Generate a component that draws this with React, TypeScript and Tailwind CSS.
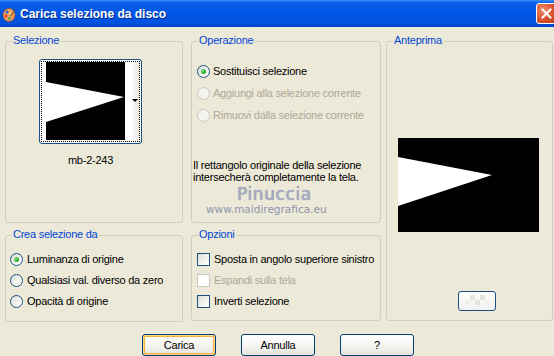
import React from "react";

const FONT = { fontFamily: '"Liberation Sans", Arial, sans-serif' };

function Radio({ checked = false, disabled = false }: { checked?: boolean; disabled?: boolean }) {
  return (
    <span
      className={
        disabled
          ? "w-[13px] h-[13px] rounded-full border border-[#CAC8BB] bg-[#F4F3EE] shrink-0 flex items-center justify-center"
          : "w-[13px] h-[13px] rounded-full border border-[#1C5180] bg-[linear-gradient(135deg,#DCDCD7_0%,#F4F4F0_60%,#FFFFFF_100%)] shrink-0 flex items-center justify-center"
      }
    >
      {checked && (
        <span className="w-[5px] h-[5px] rounded-full bg-[radial-gradient(circle_at_35%_35%,#7FE07F_0%,#21A121_70%,#1A7F1A_100%)]" />
      )}
    </span>
  );
}

function Check({ disabled = false }: { disabled?: boolean }) {
  return (
    <span
      className={
        disabled
          ? "w-[13px] h-[13px] border border-[#CAC8BB] bg-white shrink-0"
          : "w-[13px] h-[13px] border border-[#1C5180] bg-[linear-gradient(135deg,#DCDCD7_0%,#F4F4F0_60%,#FFFFFF_100%)] shrink-0"
      }
    />
  );
}

function Group({
  label,
  className,
  children,
}: {
  label: string;
  className: string;
  children?: React.ReactNode;
}) {
  return (
    <div className={"relative border border-[#D0D0BF] rounded-[3px] " + className}>
      <span className="absolute left-[6px] top-[-8px] px-[1px] bg-[#ECE9D8] text-[#0046D5] leading-[13px] tracking-[-0.25px]">
        {label}
      </span>
      {children}
    </div>
  );
}

function XPButton({ label, focused = false }: { label: string; focused?: boolean }) {
  return (
    <button
      className={
        focused
          ? "w-[74px] h-[22px] rounded-[3px] border border-[#003C74] bg-[linear-gradient(to_bottom,#FFFFFF_0%,#F3F3EF_60%,#E5E4DD_100%)] shadow-[inset_0_0_0_1px_#FFD78C,inset_0_0_0_2px_#F5B33E] text-[11px] text-black leading-none tracking-[-0.25px]"
          : "w-[74px] h-[22px] rounded-[3px] border border-[#003C74] bg-[linear-gradient(to_bottom,#FFFFFF_0%,#F3F3EF_60%,#E5E4DD_100%)] text-[11px] text-black leading-none tracking-[-0.25px]"
      }
    >
      {label}
    </button>
  );
}

function AppIcon() {
  return (
    <svg width="16" height="16" viewBox="0 0 16 16">
      <ellipse cx="7" cy="9" rx="6" ry="6.5" fill="#F0A060" stroke="#A05020" strokeWidth="0.8" />
      <circle cx="5" cy="6" r="1.6" fill="#3A6FD8" />
      <circle cx="4" cy="10" r="1.4" fill="#E23A2A" />
      <circle cx="7.5" cy="12.5" r="1.3" fill="#2FA84A" />
      <circle cx="8.5" cy="7.5" r="1" fill="#F8E060" />
      <path d="M15 1 L10 9 L9 8.5 Z" fill="#6B4A2A" />
      <path d="M10 9 L8.5 11 L9 8.5 Z" fill="#333" />
    </svg>
  );
}

function Triangle({ w, h, top, bottom, tipX, tipY }: { w: number; h: number; top: number; bottom: number; tipX: number; tipY: number }) {
  return (
    <svg width={w} height={h} viewBox={`0 0 ${w} ${h}`} className="block">
      <rect width={w} height={h} fill="#000" />
      <polygon points={`0,${top} ${tipX},${tipY} 0,${bottom}`} fill="#fff" />
    </svg>
  );
}

export default function App() {
  return (
    <div
      className="relative w-[554px] h-[356px] bg-[#ECE9D8] flex flex-col overflow-hidden text-[11px] text-black"
      style={FONT}
    >
      {/* Title bar */}
      <div className="h-[27px] shrink-0 flex items-center bg-[linear-gradient(to_bottom,#3D8FFA_0%,#0A5FEC_10%,#0056E6_45%,#0053E0_85%,#0044C6_100%)]">
        <div className="ml-[2px] mt-[1px] w-[16px] h-[16px]">
          <AppIcon />
        </div>
        <span className="ml-[2px] text-white font-bold text-[12px] tracking-[0px] [text-shadow:1px_1px_0_#0A2A8A]">
          Carica selezione da disco
        </span>
        <div className="ml-auto mr-[-3px] w-[21px] h-[21px] rounded-[3px] border border-white bg-[radial-gradient(circle_at_30%_30%,#EE8A68_0%,#D9522C_55%,#C23A18_100%)] flex items-center justify-center">
          <svg width="11" height="11" viewBox="0 0 11 11">
            <path d="M1.5 1.5 L9.5 9.5 M9.5 1.5 L1.5 9.5" stroke="#fff" strokeWidth="2" strokeLinecap="square" />
          </svg>
        </div>
      </div>

      {/* Body */}
      <div className="flex items-start pt-[14px] pl-[5px]">
        {/* Left column */}
        <div className="flex flex-col w-[178px]">
          <Group label="Selezione" className="h-[182px]">
            <div className="ml-[33px] mt-[17px] w-[103px] flex flex-col items-center">
              <div className="w-[103px] h-[85px] rounded-[3px] border border-[#1C4F85] bg-white p-[1px]">
                <div className="w-full h-full border border-dotted border-black flex">
                  <div className="w-[4px] h-full bg-white" />
                  <Triangle w={79} h={78} top={20} bottom={60} tipX={78} tipY={35} />
                  <div className="relative flex-1 h-full bg-[linear-gradient(to_right,#FFFFFF_0%,#FFFFFF_40%,#E6E6E0_100%)]">
                    <span className="absolute right-[1px] top-[37px] w-0 h-0 border-l-[3px] border-r-[3px] border-t-[3px] border-l-transparent border-r-transparent border-t-black" />
                  </div>
                </div>
              </div>
              <span className="mt-[10px] leading-[13px] tracking-[-0.25px]">mb-2-243</span>
            </div>
          </Group>
          <Group label="Crea selezione da" className="h-[87px] mt-[12px]">
            <div className="flex flex-col pt-[13px] pl-[4px] tracking-[-0.25px]">
              <div className="h-[21px] flex items-center gap-[4px]">
                <Radio checked />
                <span>Luminanza di origine</span>
              </div>
              <div className="h-[21px] flex items-center gap-[4px]">
                <Radio />
                <span>Qualsiasi val. diverso da zero</span>
              </div>
              <div className="h-[21px] flex items-center gap-[4px]">
                <Radio />
                <span>Opacità di origine</span>
              </div>
            </div>
          </Group>
        </div>

        {/* Middle column */}
        <div className="flex flex-col w-[190px] ml-[8px]">
          <Group label="Operazione" className="h-[182px]">
            <div className="flex flex-col pt-[18px] pl-[5px] tracking-[-0.25px]">
              <div className="h-[22px] flex items-center gap-[3px]">
                <Radio checked />
                <span>Sostituisci selezione</span>
              </div>
              <div className="h-[22px] flex items-center gap-[3px] text-[#ACA899]">
                <Radio disabled />
                <span>Aggiungi alla selezione corrente</span>
              </div>
              <div className="h-[22px] flex items-center gap-[3px] text-[#ACA899]">
                <Radio disabled />
                <span>Rimuovi dalla selezione corrente</span>
              </div>
            </div>
            <p className="mt-[33px] pl-[1px] leading-[12px] tracking-[-0.25px]">
              Il rettangolo originale della selezione
              <br />
              intersecherà completamente la tela.
            </p>
          </Group>
          <Group label="Opzioni" className="h-[86px] mt-[12px]">
            <div className="flex flex-col pt-[13px] pl-[5px] tracking-[-0.25px]">
              <div className="h-[21px] flex items-center gap-[4px]">
                <Check />
                <span>Sposta in angolo superiore sinistro</span>
              </div>
              <div className="h-[21px] flex items-center gap-[4px] text-[#ACA899]">
                <Check disabled />
                <span>Espandi sulla tela</span>
              </div>
              <div className="h-[21px] flex items-center gap-[4px]">
                <Check />
                <span>Inverti selezione</span>
              </div>
            </div>
          </Group>
        </div>

        {/* Right column */}
        <div className="w-[167px] ml-[5px]">
          <Group label="Anteprima" className="h-[280px]">
            <div className="flex flex-col pt-[96px] pl-[11px]">
              <Triangle w={141} h={94} top={19} bottom={68} tipX={94} tipY={37} />
              <div className="mt-[59px] ml-[60px] w-[38px] h-[20px] rounded-[3px] border border-[#1C4F85] bg-[linear-gradient(to_bottom,#FFFFFF_0%,#F1F1EC_100%)] flex items-center justify-center">
                <svg width="26" height="14" viewBox="0 0 26 14">
                  <rect x="6" y="1" width="5" height="5" fill="#E4E4E0" />
                  <rect x="16" y="1" width="5" height="5" fill="#E4E4E0" />
                  <rect x="11" y="6" width="5" height="5" fill="#E4E4E0" />
                  <rect x="1" y="6" width="5" height="5" fill="#EFEFEB" />
                  <rect x="21" y="6" width="4" height="5" fill="#EFEFEB" />
                </svg>
              </div>
            </div>
          </Group>
        </div>
      </div>

      {/* Buttons */}
      <div className="flex pl-[142px] gap-[25px] mt-[12px]">
        <XPButton label="Carica" focused />
        <XPButton label="Annulla" />
        <XPButton label="?" />
      </div>

      {/* Watermark overlay */}
      <span
        className="absolute left-[237px] top-[184px] text-[17px] leading-[20px] tracking-[0.6px] text-[#A6ABC2] [text-shadow:0_0_1px_#7A809C]"
        style={{ fontFamily: '"DejaVu Sans", sans-serif' }}
      >
        Pinuccia
      </span>
      <span
        className="absolute left-[206px] top-[202px] text-[10.5px] leading-[14px] text-[#8E94AC]"
        style={{ fontFamily: '"DejaVu Sans", sans-serif' }}
      >
        www.maidiregrafica.eu
      </span>
    </div>
  );
}
